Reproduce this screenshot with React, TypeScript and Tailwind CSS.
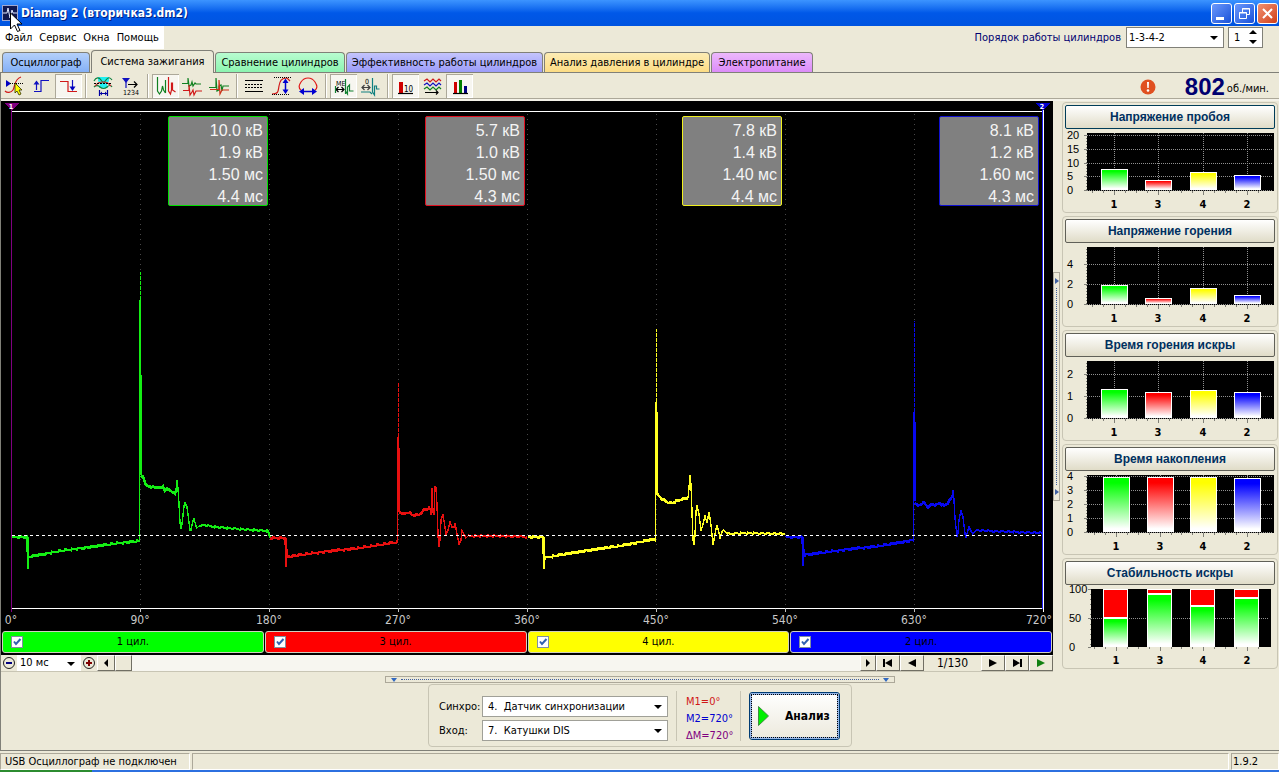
import { useState, type ReactNode } from "react";
import clsx from "clsx";

const tabs = [
  { label: "Осциллограф", className: "w-[88px] from-[#b4d0fa] to-[#84b0f6]" },
  { label: "Система зажигания", className: "w-[123px]" },
  { label: "Сравнение цилиндров", className: "w-[130px] from-[#b8fcd0] to-[#8cf4b0]" },
  { label: "Эффективность работы цилиндров", className: "w-[197px] from-[#c4c4fc] to-[#9c9cf8]" },
  { label: "Анализ давления в цилиндре", className: "w-[166px] from-[#fcecb4] to-[#fcdc84]" },
  { label: "Электропитание", className: "w-[102px] from-[#ecb8fc] to-[#dc8cf8]" },
];

const readings = [
  { values: ["10.0 кВ", "1.9 кВ", "1.50 мс", "4.4 мс"], border: "border-[#00e000]" },
  { values: ["5.7 кВ", "1.0 кВ", "1.50 мс", "4.3 мс"], border: "border-[#e01020]" },
  { values: ["7.8 кВ", "1.4 кВ", "1.40 мс", "4.4 мс"], border: "border-[#f0f020]" },
  { values: ["8.1 кВ", "1.2 кВ", "1.60 мс", "4.3 мс"], border: "border-[#1010d0]" },
];

const cylinders = [
  { label: "1 цил.", bg: "bg-[#00ff00]" },
  { label: "3 цил.", bg: "bg-[#ff0000]" },
  { label: "4 цил.", bg: "bg-[#ffff00]" },
  { label: "2 цил.", bg: "bg-[#0000ff]" },
];

const waves = [
  {
    color: "#14ee14",
    charge: "12,537 27,537 28,557 60,551 90,547 120,543 139,541",
    kick: "28,537 28,569",
    spike: { x: 140, tip: 272, body: 300, thick: 375, base: 475 },
    burn: "141,475 143,477 146,485 149,486 151,488 153,486 156,488 160,487 163,487 165,491 167,488 170,491 175,493 176,490",
    ring: "176,490 177,480 178,489 179,504 180,522 181,529 182,524 184,506 185,503 187,507 189,522 190,530 191,530 193,521 194,519 196,526 197,528 199,526",
    tail: "199,526 204,525 215,527 240,529 268,531 270,538",
  },
  {
    color: "#e81010",
    charge: "270,538 285,538 287,557 300,555 330,551 360,548 398,542",
    kick: "286,538 286,567",
    spike: { x: 398, tip: 383, body: 437, thick: 448, base: 512 },
    burn: "399,512 404,514 409,512 412,515 419,515 424,510 430,508",
    ring: "430,508 431,515 432,488 433,512 434,515 435,486 436,488 437,505 438,535 439,547 440,540 441,520 443,514 444,521 446,534 448,530 450,522 452,527 454,527 455,523 457,534 459,544 461,540 462,531 464,534 466,538 468,536",
    tail: "468,536 480,536 500,536 527,537",
  },
  {
    color: "#ffff20",
    charge: "528,537 543,537 544,558 560,555 590,550 620,546 655,539",
    kick: "544,537 544,569",
    spike: { x: 656, tip: 329, body: 402, thick: 412, base: 494 },
    burn: "657,494 662,499 667,502 672,503 677,501 683,499 688,498",
    ring: "688,498 689,488 690,475 691,485 692,512 693,540 694,545 695,535 696,512 697,505 699,514 701,531 703,524 705,516 707,523 709,512 711,525 713,545 715,534 717,525 719,533 720,538 722,532 724,530 727,534",
    tail: "727,534 745,533 785,534",
  },
  {
    color: "#0808f0",
    charge: "786,537 802,537 804,555 820,553 850,549 880,546 914,540",
    kick: "803,537 803,566",
    spike: { x: 914, tip: 321, body: 412, thick: 422, base: 501 },
    burn: "915,502 918,506 921,504 924,503 928,507 932,504 936,505 940,503 944,506 948,503 952,497",
    ring: "952,497 953,490 954,500 955,518 957,537 958,533 959,520 961,511 963,517 965,534 966,537 968,530 969,527 971,531 973,534 976,530",
    tail: "976,530 990,531 1015,532 1042,533",
  },
];

// Resample a polyline to one point per unit and add a small repeatable ripple
function noisy(points: string) {
  const pts = points.split(" ").map((p) => p.split(",").map(Number));
  const out: string[] = [];
  for (let i = 0; i < pts.length - 1; i++) {
    const [x0, y0] = pts[i];
    const [x1, y1] = pts[i + 1];
    for (let x = x0; x < x1; x++) {
      const y = y0 + ((y1 - y0) * (x - x0)) / (x1 - x0);
      out.push(`${x},${y + (((x * 7919) % 13) - 6) / 8}`);
    }
  }
  out.push(pts[pts.length - 1].join(","));
  return out.join(" ");
}

interface Chart {
  title: string;
  ticks: [string, number][];
  bars: [number, number][];
}

const charts: Chart[] = [
  {
    title: "Напряжение пробоя",
    ticks: [["20", 6], ["15", 20], ["10", 34], ["5", 47], ["0", 61]],
    bars: [[36, 40], [80, 51], [125, 43], [169, 46]],
  },
  {
    title: "Напряжение горения",
    ticks: [["4", 21], ["2", 41], ["0", 61]],
    bars: [[36, 42], [80, 55], [125, 45], [169, 52]],
  },
  {
    title: "Время горения искры",
    ticks: [["2", 17], ["1", 39], ["0", 61]],
    bars: [[36, 32], [80, 35], [125, 33], [169, 35]],
  },
  {
    title: "Время накопления",
    ticks: [["4", 5], ["3", 19], ["2", 33], ["1", 47], ["0", 61]],
    bars: [[38, 6], [82, 6], [125, 6], [169, 7]],
  },
];

const order = ["1", "3", "4", "2"];
const barColors = ["#00ff00", "#ff0000", "#ffff00", "#0000ff"];

const stability = [
  { x: 38, split: 33 },
  { x: 82, split: 9 },
  { x: 125, split: 21 },
  { x: 169, split: 13 },
];

function Separator() {
  return <div className="mx-[3px] h-6 w-[2px] border-l border-[#aca899] bg-white" />;
}

function ToolButton({ label, pressed, children }: { label: string; pressed?: boolean; children: ReactNode }) {
  return (
    <button
      type="button"
      aria-label={label}
      aria-pressed={pressed}
      className={clsx(
        "h-6 w-[27px] shrink-0",
        pressed && "bg-[#f7f6f0] shadow-[inset_1px_1px_0_#aca899,inset_-1px_-1px_0_#ffffff]",
      )}
    >
      <svg viewBox="0 0 27 24" className="block h-6 w-[27px]" fill="none" strokeWidth="1.2">
        {children}
      </svg>
    </button>
  );
}

function Toolbar() {
  return (
    <div className="flex h-7 items-start border-b-2 border-[#f4f2e8] pt-px shadow-[inset_0_-1px_0_#aca899]">
      <ToolButton label="Курсор">
        <path d="M4 17c2 2 6 2 8-1s1-11 8-13" stroke="#d01818" />
        <path d="M5 6v7l5-3.500z" fill="#0000c0" />
        <path d="M9 9.500h13" stroke="#000" strokeDasharray="1 1" />
        <path d="M14 9v10l2-2 2 4 2-1-2-4h3z" fill="#ffff00" stroke="#303000" strokeWidth=".8" />
      </ToolButton>
      <ToolButton label="Фронт">
        <path d="M6 17.500h7V6.500h8M8.500 16V8" stroke="#1010c0" />
        <path d="M5.500 10.500h6l-3-4z" fill="#1010c0" />
      </ToolButton>
      <ToolButton label="Спад" pressed>
        <path d="M5 7.500h8v10h9" stroke="#d01818" />
        <path d="M17.500 6v8" stroke="#1010c0" />
        <path d="M14.500 12.500h6l-3 4.500z" fill="#0000c0" />
      </ToolButton>
      <Separator />
      <ToolButton label="Окно">
        <path d="M8 3h11v4l-2 3 1 4H9l1-4-2-3z" fill="#20f0f0" />
        <path d="M4 7c2-4 5-4 7-1s3 3 5 0 4-3 6 0M4 13c2-2 4-2 6 0s5 2 7 0 4-2 5 0" stroke="#108040" />
        <path d="M5 12c3-3 4-4 8-4s5 1 8 4" stroke="#c03030" />
        <path d="M4 9.500h18" stroke="#000" strokeDasharray="2 1" />
        <path d="M9.500 16v6M17.500 16v6M10 19.500h7" stroke="#0000a0" />
        <path d="M10 19.500l2-2v4zM17 19.500l-2-2v4z" fill="#0000a0" />
      </ToolButton>
      <ToolButton label="Нумерация">
        <path d="M5 4h8l-4 5z" fill="#1010c0" />
        <path d="M9 8v6" stroke="#1010c0" />
        <path d="M11 10.500h9M17 7.500l3 3-3 3" stroke="#000" />
        <text x="6" y="21" fontSize="7" fill="#000">1234</text>
      </ToolButton>
      <Separator />
      <ToolButton label="Последовательно" pressed>
        <path d="M5.500 3v14l2 3 2-3 1-5 1 4 2 3" stroke="#108020" />
        <path d="M13.500 6v13" stroke="#108020" />
        <path d="M16.500 3v14l2 3 1-4V9h1v7l3 2" stroke="#d01818" />
      </ToolButton>
      <ToolButton label="Раздельно">
        <path d="M3 9.500h6V4l1 8 2-1 1-3 1 4 2-3 1 1h5" stroke="#108020" />
        <path d="M4 16.500h6V11l1 10 2-3 1-2 1 5 2-4h6" stroke="#d01818" />
      </ToolButton>
      <ToolButton label="Наложение">
        <path d="M3 13.500h7V4l1 13 2-1v-4l2-1 1 6 1-5h6" stroke="#108020" />
        <path d="M4 15.500h9V6l1 14 2-4h7" stroke="#d03018" />
      </ToolButton>
      <Separator />
      <ToolButton label="Линии">
        <path d="M4 6.500h18M4 17.500h18" stroke="#000" />
        <path d="M4 10.500h18M4 13.500h18" stroke="#000" strokeDasharray="2 1" />
      </ToolButton>
      <ToolButton label="Размах по вертикали">
        <path d="M4 20c7 0 6-3 7-8s2-8 8-8l3 3" stroke="#d01818" />
        <path d="M6 3.500h17M4 20.500h18" stroke="#000" strokeDasharray="1 1" />
        <path d="M17.500 7v11" stroke="#0000d0" strokeWidth="1.500" />
        <path d="M14.500 9h6l-3-4.500zM14.500 15.500h6l-3 4.500z" fill="#0000d0" />
      </ToolButton>
      <ToolButton label="Размах по горизонтали">
        <path d="M6 16c-3-2-2-5 0-8s4-4 7-4 5 1 7 4 3 6 0 8" stroke="#e01818" />
        <path d="M7 17.500h13" stroke="#0000d0" strokeWidth="1.500" />
        <path d="M9 14v7l-5-3.500zM17 14v7l5-3.500z" fill="#0000d0" />
      </ToolButton>
      <Separator />
      <ToolButton label="Маркеры" pressed>
        <text x="6" y="12" fontSize="7" fill="#000">ME</text>
        <path d="M6 15.500h8M8.500 13L6 15.500 8.500 18M11.500 13l2.500 2.500-2.500 2.500" stroke="#000" />
        <path d="M5.500 12v7M15.500 5v15M15.500 9v8l2 3v-7l2-2v6h4" stroke="#108030" />
      </ToolButton>
      <ToolButton label="Сброс нуля">
        <text x="8" y="10" fontSize="7" fill="#000">0</text>
        <path d="M5 13.500h8M10.500 11l2.500 2.500-2.500 2.500M7.500 11L5 13.500 7.500 16" stroke="#404040" />
        <path d="M15.500 4v14l2 3v-9h2v3h3M4 18h9l2 2" stroke="#108080" />
      </ToolButton>
      <Separator />
      <ToolButton label="Значения" pressed>
        <rect x="7" y="8" width="4" height="11" fill="#d00000" />
        <text x="12" y="18" fontSize="8" fill="#000">10</text>
        <path d="M6 19.500h15" stroke="#000" />
      </ToolButton>
      <ToolButton label="Тренды">
        <path d="M5 7l3-2 3 3 3-3 3 3 3-3 2 2" stroke="#d01818" />
        <path d="M5 11l3-2 3 3 3-3 3 3 3-3 2 2" stroke="#1010c0" />
        <path d="M5 15l3-2 3 3 3-3 3 3 3-3 2 2" stroke="#108020" />
        <path d="M6 18.500h13M17 16.500l2 2-2 2" stroke="#000" />
      </ToolButton>
      <ToolButton label="Гистограммы" pressed>
        <rect x="8" y="8" width="3" height="11" fill="#d00000" />
        <rect x="13" y="6" width="3" height="13" fill="#008000" />
        <rect x="18" y="12" width="3" height="7" fill="#000080" />
        <path d="M7 19.500h15" stroke="#000" />
      </ToolButton>

      <div className="ml-auto flex h-[26px] items-center pr-[10px]">
        <svg viewBox="0 0 16 16" className="mr-[29px] size-4" aria-label="Внимание">
          <circle cx="8" cy="8" r="7.500" fill="#e05020" />
          <path d="M7 3h2l-.3 6H7.300z" fill="#fff" />
          <circle cx="8" cy="11.500" r="1.300" fill="#fff" />
        </svg>
        <span className="font-['Liberation_Sans',sans-serif] text-2xl leading-6 font-bold text-[#000070]">802</span>
        <span className="ml-[2px] pt-[3px]">об./мин.</span>
      </div>
    </div>
  );
}

function Scope() {
  return (
    <div className="relative bg-black">
      <svg viewBox="1 101 1052 529" className="block w-full" fill="none" shapeRendering="crispEdges">
        <path d="M11 111.500H1043M11 608.500H1043" stroke="#fff" />
        {[140, 269, 398, 527, 656, 785, 914].map((x) => (
          <g key={x}>
            <path d={`M${x + 0.5} 114V608`} stroke="#484848" strokeDasharray="1 4" />
            <path d={`M${x + 0.5} 608V612`} stroke="#c0c0c0" />
          </g>
        ))}
        {waves.map((w) => (
          <g key={w.color} stroke={w.color}>
            <polyline points={noisy(w.charge)} strokeWidth="2.500" />
            <polyline points={w.kick} strokeWidth="1.500" />
            <path d={`M${w.spike.x - 0.5} 542V${w.spike.body}`} />
            <path d={`M${w.spike.x + 0.5} ${w.spike.body}V${w.spike.tip}`} strokeDasharray="4 1" />
            <path d={`M${w.spike.x + 0.5} ${w.spike.body}V${w.spike.base}`} />
            <path d={`M${w.spike.x + 0.5} ${w.spike.thick}V${w.spike.base}`} strokeWidth="3" />
            <polyline points={noisy(w.burn)} strokeWidth="2.500" />
            <polyline points={w.ring} strokeWidth="1.400" />
            <polyline points={noisy(w.tail)} strokeWidth="2" />
          </g>
        ))}
        <path d="M12 535.500H1043" stroke="#fff" strokeDasharray="3 3" />
        <path d="M11.500 104V612" stroke="#800080" />
        <path d="M1042.500 108V609" stroke="#2020ff" />
        <path d="M1043.500 108V612" stroke="#fff" />
        <path d="M4 103h15l-7 7z" fill="#800080" />
        <path d="M1035 103h15l-7 7z" fill="#0000d0" />
        <text x="11" y="109" fontSize="7" fontWeight="bold" fill="#fff" textAnchor="middle">1</text>
        <text x="1042" y="109" fontSize="7" fontWeight="bold" fill="#fff" textAnchor="middle">2</text>
        {[0, 90, 180, 270, 360, 450, 540, 630].map((deg, i) => (
          <text key={deg} x={11 + i * 129} y="624" fontSize="12" fill="#c8c8c8" textAnchor="middle">
            {deg}°
          </text>
        ))}
        <text x="1052" y="624" fontSize="12" fill="#c8c8c8" textAnchor="end">720°</text>
      </svg>
      <div className="absolute inset-x-0 top-[15px] grid grid-cols-4 pr-[14px] pl-[10px]">
        {readings.map((r) => (
          <div
            key={r.border}
            className={clsx(
              "h-[90px] w-[100px] justify-self-end rounded-[2px] border bg-[#808080] pt-[3px] pr-1 text-right font-['Liberation_Sans',sans-serif] text-base leading-[22px] text-[#f4f4f4]",
              r.border,
            )}
          >
            {r.values.map((v) => (
              <div key={v}>{v}</div>
            ))}
          </div>
        ))}
      </div>
    </div>
  );
}

function CylinderBar() {
  return (
    <div className="grid h-[25px] grid-cols-4 gap-px bg-black px-px pt-px pb-[2px]">
      {cylinders.map((c) => (
        <label
          key={c.label}
          className={clsx("flex items-center rounded-[3px] border border-[#d0d0c0] px-2", c.bg)}
        >
          <span className="grid size-3">
            <input
              type="checkbox"
              defaultChecked
              className="peer col-start-1 row-start-1 size-3 appearance-none border border-[#8090a0] bg-white"
            />
            <svg viewBox="0 0 12 12" className="pointer-events-none invisible col-start-1 row-start-1 size-3 peer-checked:visible">
              <path d="M3 5.500l2 2.500 4.500-5" fill="none" stroke="#3060b0" strokeWidth="2" />
            </svg>
          </span>
          <span className="flex-1 pr-3 text-center text-black">{c.label}</span>
        </label>
      ))}
    </div>
  );
}

const raised =
  "flex h-4 shrink-0 items-center justify-center border border-t-white border-l-white border-r-[#716f64] border-b-[#716f64] bg-[#ece9d8]";

function NavButton({ label, className, d }: { label: string; className: string; d: string }) {
  return (
    <button type="button" aria-label={label} className={clsx(raised, className)}>
      <svg viewBox="0 0 12 10" className="h-[10px] w-3" fill="currentColor">
        <path d={d} />
      </svg>
    </button>
  );
}

function ScrollRow() {
  return (
    <div className="flex h-[17px] items-start border-b border-[#c8c5b4] bg-[#f7f6f0]">
      <button type="button" aria-label="Уменьшить" className="size-4 shrink-0 bg-[#ece9d8]">
        <svg viewBox="0 0 16 16" className="size-4" fill="none">
          <circle cx="8" cy="8" r="5.500" stroke="#202020" />
          <path d="M5 8h6" stroke="#000080" strokeWidth="2" />
        </svg>
      </button>
      <div className="relative w-16 bg-white">
        <select aria-label="Развёртка" className="block h-4 w-full appearance-none bg-white pl-[3px] leading-4">
          <option>10 мс</option>
        </select>
        <Caret className="right-[6px] top-[7px]" />
      </div>
      <button type="button" aria-label="Увеличить" className="size-4 shrink-0 bg-[#ece9d8]">
        <svg viewBox="0 0 16 16" className="size-4" fill="none">
          <circle cx="8" cy="8" r="5.500" stroke="#202020" />
          <path d="M5 8h6M8 5v6" stroke="#800000" strokeWidth="2" />
        </svg>
      </button>
      <NavButton label="Влево" className="w-[18px]" d="M4 5l4-4v8z" />
      <div className={clsx(raised, "w-[17px]")} />
      <div className="flex-1" />
      <NavButton label="Вправо" className="w-4" d="M8 5L4 1v8z" />
      <NavButton label="Первый кадр" className="w-6" d="M1 1h2v8H1zM3 5l7-4v8z" />
      <NavButton label="Назад" className="w-6" d="M2 5l8-4v8z" />
      <span className="w-[57px] bg-[#ece9d8] text-center text-xs leading-4">1/130</span>
      <NavButton label="Вперёд" className="w-6" d="M10 5L2 1v8z" />
      <NavButton label="Последний кадр" className="w-6" d="M9 1h2v8H9zM9 5L2 1v8z" />
      <NavButton label="Воспроизвести" className="w-6 text-[#108010]" d="M10 5L2 1v8z" />
    </div>
  );
}

function Caret({ className }: { className: string }) {
  return (
    <svg viewBox="0 0 8 4" className={clsx("pointer-events-none absolute h-1 w-2", className)}>
      <path d="M0 0h8L4 4z" fill="#000" />
    </svg>
  );
}

function CategoryAxis({ bars }: { bars: number[] }) {
  return (
    <>
      {bars.map((x, i) => (
        <g key={x}>
          <path
            d={`M${x - 8.5} 62v2M${x + 2.5} 62v2M${x + 13.5} 62v4M${x + 24.5} 62v2`}
            stroke="#808078"
          />
          <text x={x + 13} y="79" fontSize="11" fontWeight="bold" fill="#000" textAnchor="middle">
            {order[i]}
          </text>
        </g>
      ))}
    </>
  );
}

function ChartCard({ title, focused, children }: { title: string; focused?: boolean; children: ReactNode }) {
  return (
    <section className="rounded-[4px] border border-[#c8c5b4] px-[2px] pt-[2px]">
      <button
        type="button"
        className={clsx(
          "block h-6 w-full rounded-[2px] border bg-linear-to-b from-white to-[#e0dcc8] font-['Liberation_Sans',sans-serif] text-xs leading-[22px] font-bold text-[#003060]",
          focused ? "border-[#003c58]" : "border-[#606058]",
        )}
      >
        {title}
      </button>
      <svg viewBox="0 0 210 83" className="block w-full overflow-visible" shapeRendering="crispEdges">
        {children}
      </svg>
    </section>
  );
}

function BarChart({ chart }: { chart: Chart }) {
  return (
    <>
      <rect x="22" y="4" width="187" height="58" fill="#000" />
      {chart.ticks.map(([label, y]) => (
        <g key={label}>
          <path d={`M22 ${y + 0.5}H207`} stroke="#909090" strokeDasharray="1 1" />
          <path d={`M19 ${y + 0.5}h3`} stroke="#808078" />
          <text x="2" y={y + 4} fontSize="11" fill="#000" fontFamily="Liberation Sans, sans-serif">{label}</text>
        </g>
      ))}
      <path d="M21.500 6V62" stroke="#808078" strokeDasharray="1 2" />
      {chart.bars.map(([x, top], i) => (
        <g key={x}>
          <path d={`M${x + 13.5} 4V61`} stroke="#909090" strokeDasharray="1 1" />
          <rect x={x + 0.5} y={top + 0.5} width="26" height={60 - top} fill={`url(#bar${i})`} stroke="#fff" />
        </g>
      ))}
      <CategoryAxis bars={chart.bars.map(([x]) => x)} />
    </>
  );
}

function Sidebar() {
  return (
    <aside className="flex w-[217px] shrink-0 flex-col gap-[3px] pt-px pr-px">
      <svg className="absolute size-0" aria-hidden="true">
        <defs>
          {barColors.map((c, i) => (
            <linearGradient key={c} id={`bar${i}`} x1="0" y1="0" x2="0" y2="1">
              <stop offset="0.1" stopColor={c} />
              <stop offset="0.95" stopColor="#fff" />
            </linearGradient>
          ))}
        </defs>
      </svg>
      {charts.map((chart, i) => (
        <ChartCard key={chart.title} title={chart.title} focused={i === 0}>
          <BarChart chart={chart} />
        </ChartCard>
      ))}
      <ChartCard title="Стабильность искры">
        <rect x="26" y="4" width="180" height="58" fill="#000" />
        <path d="M26 33.500H204" stroke="#909090" strokeDasharray="1 1" />
        <path d="M23 4.500h3M23 33.500h3M23 62.500h3" stroke="#808078" />
        <path d="M25.500 4V62" stroke="#808078" strokeDasharray="1 4" />
        {[["100", 8], ["50", 37], ["0", 66]].map(([label, y]) => (
          <text key={label} x="4" y={y} fontSize="11" fill="#000" fontFamily="Liberation Sans, sans-serif">{label}</text>
        ))}
        {stability.map((s) => (
          <g key={s.x}>
            <rect x={s.x} y="4" width="25" height={s.split - 4} fill="#fff" />
            <rect x={s.x + 1} y="5" width="23" height={s.split - 6} fill="#f00" />
            <rect x={s.x + 0.5} y={s.split + 0.5} width="24" height={61 - s.split} fill="url(#bar0)" stroke="#fff" />
          </g>
        ))}
        <CategoryAxis bars={stability.map((s) => s.x)} />
      </ChartCard>
    </aside>
  );
}

function SelectRow({ id, label, value }: { id: string; label: string; value: string }) {
  return (
    <div className="flex items-center">
      <label htmlFor={id} className="w-[43px]">{label}</label>
      <div className="relative w-[186px]">
        <select id={id} className="block h-[21px] w-full appearance-none border border-[#a0a098] bg-white pl-[5px]">
          <option>{value}</option>
        </select>
        <Caret className="top-[9px] right-[6px]" />
      </div>
    </div>
  );
}

function TitleBar() {
  const windowButton =
    "flex size-[21px] items-center justify-center rounded-[3px] border border-white bg-linear-to-br";
  return (
    <header className="relative flex h-[26px] items-center bg-linear-to-b from-[#3c94ff] via-[#0058e8] to-[#0054e0] pr-px pl-[2px] text-white">
      <svg viewBox="0 0 16 16" className="mr-[3px] size-4" fill="none">
        <rect x=".5" y=".5" width="15" height="15" fill="#101850" stroke="#a0a8d0" />
        <path d="M1 8h4l1-5 2 10 2-8 1 3h4" stroke="#e0e8ff" />
      </svg>
      <h1 className="text-xs font-bold [text-shadow:1px_1px_#002080]">
        Diamag 2 (вторичка3.dm2)
      </h1>
      <div className="ml-auto flex gap-[2px]">
        <button type="button" aria-label="Свернуть" className={clsx(windowButton, "from-[#6c98fc] to-[#1850d8]")}>
          <svg viewBox="0 0 19 19" className="size-[19px]"><path d="M4 13h8v3H4z" fill="#fff" /></svg>
        </button>
        <button type="button" aria-label="Восстановить" className={clsx(windowButton, "from-[#6c98fc] to-[#1850d8]")}>
          <svg viewBox="0 0 19 19" className="size-[19px]" fill="none" stroke="#fff">
            <path d="M4.500 8.500h7v6h-7zM4 9h8M7.500 8V4.500h7v6H12M7 5h8" />
          </svg>
        </button>
        <button type="button" aria-label="Закрыть" className={clsx(windowButton, "from-[#f09070] to-[#d03c10]")}>
          <svg viewBox="0 0 19 19" className="size-[19px]"><path d="M5 5l9 9M14 5l-9 9" stroke="#fff" strokeWidth="2" /></svg>
        </button>
      </div>
      {/* Mouse pointer */}
      <svg viewBox="0 0 12 20" className="absolute top-3 left-[10px] z-10 h-5 w-3">
        <path d="M.5 1v16l4-4 3 6.500 2.500-1L7 12h5z" fill="#fff" stroke="#000" />
      </svg>
    </header>
  );
}

export default function App() {
  const [active, setActive] = useState(1);

  return (
    <div className="flex min-h-screen flex-col bg-[#ece9d8] font-['DejaVu_Sans_Condensed','Liberation_Sans',sans-serif] text-[11px] leading-[14px] text-black">
      <TitleBar />

      <div className="flex h-6 items-start">
        <nav className="flex h-[23px] items-center gap-[7px] bg-white px-[5px]">
          {["Файл", "Сервис", "Окна", "Помощь"].map((item) => (
            <button key={item} type="button">{item}</button>
          ))}
        </nav>
        <div className="ml-auto flex items-center pt-px pr-4">
          <label htmlFor="order" className="mr-[5px] text-[#000070]">Порядок работы цилиндров</label>
          <div className="relative w-[98px]">
            <select id="order" className="block h-[21px] w-full appearance-none border border-[#808078] bg-white pl-[2px]">
              <option>1-3-4-2</option>
            </select>
            <Caret className="top-[9px] right-[6px]" />
          </div>
          <div className="relative ml-1 w-[35px]">
            <input aria-label="Цилиндр" defaultValue="1" className="block h-[21px] w-full border border-[#808078] bg-white pl-[5px]" />
            <svg viewBox="0 0 8 14" className="pointer-events-none absolute top-[3px] right-[6px] h-[14px] w-2">
              <path d="M0 4l4-4 4 4zM0 10h8l-4 4z" fill="#000" />
            </svg>
          </div>
        </div>
      </div>

      <div role="tablist" className="flex h-[23px] items-end border-b border-[#808078] pl-[2px]">
        {tabs.map((tab, i) => (
          <button
            key={tab.label}
            type="button"
            role="tab"
            aria-selected={i === active}
            onClick={() => setActive(i)}
            className={clsx(
              "mr-px shrink-0 rounded-t-[4px] border border-b-0 border-[#808078] whitespace-nowrap",
              tab.className,
              i === active ? "-mb-px h-[23px] bg-[#ece9d8]" : "h-5 bg-linear-to-b",
            )}
          >
            {tab.label}
          </button>
        ))}
      </div>

      <div className="border-l border-[#808078]">
        <Toolbar />
      </div>

      <main className="flex flex-col border-b border-l border-[#808078] pb-[3px]">
        <div className="flex items-start">
          <div className="min-w-0 flex-1">
            <Scope />
            <CylinderBar />
            <ScrollRow />
          </div>
          <div className="mt-[171px] mr-[2px] flex h-[229px] w-[7px] flex-col items-center justify-between border border-[#aca899] py-[5px]">
            <svg viewBox="0 0 4 6" className="h-[6px] w-1"><path d="M0 0l4 3-4 3z" fill="#4060a0" /></svg>
            <div className="my-1 flex-1 border-l border-dotted border-[#4060a0]" />
            <svg viewBox="0 0 4 6" className="h-[6px] w-1"><path d="M0 0l4 3-4 3z" fill="#4060a0" /></svg>
          </div>
          <Sidebar />
        </div>

        <div className="mt-1 flex h-[7px] w-[510px] items-center justify-between self-center border border-[#aca899] px-[5px]">
          <svg viewBox="0 0 6 4" className="h-1 w-[6px]"><path d="M0 0h6L3 4z" fill="#3068c0" /></svg>
          <div className="mx-1 flex-1 border-t border-dotted border-[#4060a0]" />
          <svg viewBox="0 0 6 4" className="h-1 w-[6px]"><path d="M0 0h6L3 4z" fill="#3068c0" /></svg>
        </div>

        <div className="mt-px flex h-[63px] w-[424px] items-center self-center rounded-[4px] border border-[#c8c5b4] px-[10px]">
          <div className="flex flex-col gap-[3px] pt-[6px]">
            <SelectRow id="sync" label="Синхро:" value={"4.\u00a0 Датчик синхронизации"} />
            <SelectRow id="input" label="Вход:" value={"7.\u00a0 Катушки DIS"} />
          </div>
          <div className="ml-2 h-[50px] w-[65px] border-x border-[#c8c5b4] pt-[2px] pl-[9px] leading-[17px]">
            <div className="text-[#d01818]">M1=0°</div>
            <div className="text-[#0000d0]">M2=720°</div>
            <div className="text-[#800080]">ΔM=720°</div>
          </div>
          <button
            type="button"
            className="ml-2 flex h-12 w-[91px] items-center gap-4 rounded-[3px] border border-[#003c74] bg-linear-to-b from-white to-[#ece9dc] px-2 text-xs font-bold shadow-[inset_0_0_0_2px_#98b8e8] outline-1 -outline-offset-3 outline-[#000000] outline-dotted"
          >
            <svg viewBox="0 0 11 20" className="h-5 w-[11px] shrink-0">
              <path d="M.5.500v19L10.500 10z" fill="#00f000" stroke="#409040" />
            </svg>
            Анализ
          </button>
        </div>
      </main>

      <footer className="mt-auto">
        <div className="flex h-[19px] gap-[2px] pt-[2px]">
          <div className="w-[190px] border border-[#aca899] border-r-white border-b-white pl-1 leading-4">
            USB Осциллограф не подключен
          </div>
          <div className="flex-1 border border-[#aca899] border-r-white border-b-white" />
          <div className="w-12 border border-[#aca899] border-r-white border-b-white pl-px leading-4">1.9.2</div>
        </div>
        <div className="flex h-[2px] bg-[#2c70e0]">
          <div className="w-[92px] bg-[#2c8c30]" />
        </div>
      </footer>
    </div>
  );
}
